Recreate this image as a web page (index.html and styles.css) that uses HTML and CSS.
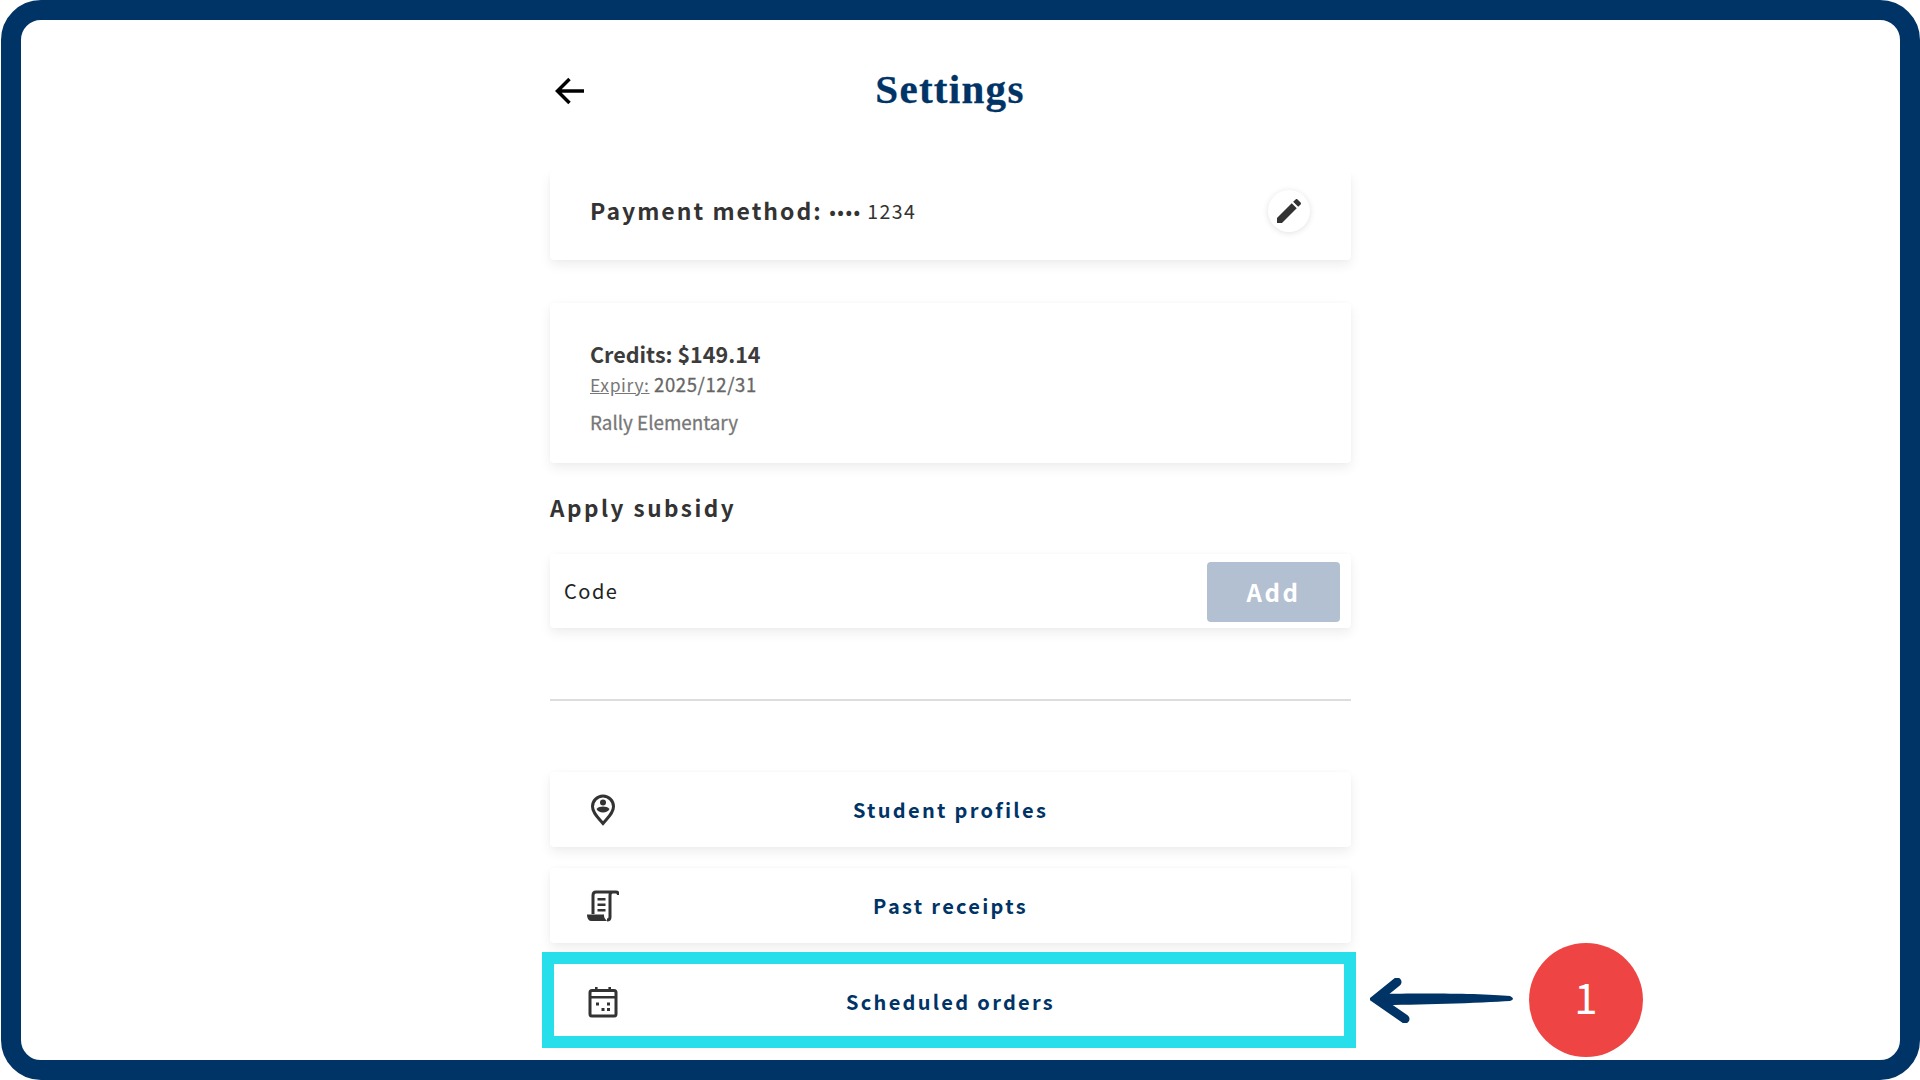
FILE: index.html
```html
<!DOCTYPE html>
<html lang="en">
<head>
<meta charset="utf-8">
<title>Settings</title>
<link rel="stylesheet" href="styles.css">
</head>
<body>
<div class="frame">
  <div class="page">
    <header class="top">
      <svg class="back" viewBox="0 0 30 28"><path d="M29 14H3M14.500 2 2.500 14l12 12"/></svg>
      <h1>Settings</h1>
      <span></span>
    </header>

    <section class="card pay">
      <p><b>Payment method:</b> <span class="num">•••• 1234</span></p>
      <span class="edit">
        <svg viewBox="0 0 24 24"><path d="M3 17.250V21h3.750L17.810 9.940l-3.750-3.750L3 17.250zM20.710 7.040c.39-.39.39-1.020 0-1.410l-2.340-2.340c-.39-.39-1.020-.39-1.410 0l-1.830 1.830 3.750 3.750 1.830-1.830z"/></svg>
      </span>
    </section>

    <section class="card credits">
      <p class="amount">Credits: $149.14</p>
      <p class="expiry"><u>Expiry:</u> <span>2025/12/31</span></p>
      <p class="school">Rally Elementary</p>
    </section>

    <h2>Apply subsidy</h2>
    <section class="card code">
      <span class="code-label">Code</span>
      <button class="add">Add</button>
    </section>

    <hr>

    <a class="card row">
      <svg class="icon" viewBox="0 0 32 32"><path class="line" d="M16 29.500C11 23.500 5.500 19 5.500 12.500a10.500 10.500 0 0 1 21 0C26.500 19 21 23.500 16 29.500z"/><circle cx="16" cy="8.500" r="3"/><path d="M9.500 15c1.500-1.800 4-2.500 6.500-2.500s5 .7 6.500 2.500c-1 2.300-3.500 3.500-6.500 3.500s-5.500-1.200-6.500-3.500z"/></svg>
      <span>Student profiles</span>
    </a>
    <a class="card row">
      <svg class="icon" viewBox="0 0 32 32"><path class="line" d="M6 24V5.500C6 3.500 7 2 9 2h20c1.500 0 2.500 1 2.500 3M25.500 2C24 2 23 3.500 23 5.500V27c0 2-1.200 3-3 3"/><path d="M10.500 8h8v2.600h-8zM10.500 13.500h8v2.600h-8zM10.500 19h8v2.600h-8z"/><path d="M0 24.500h17c0 3 .5 4 3 6.500H4c-2.500 0-4-3-4-6.500z"/></svg>
      <span>Past receipts</span>
    </a>
    <a class="card row">
      <svg class="icon" viewBox="0 0 32 32"><rect class="line" x="3" y="4.500" width="26" height="25.500" rx="2"/><path d="M3 10h26v2.500H3zM8 1h2.600v5H8zM21.400 1H24v5h-2.600zM9 16.500h3v3H9zM20 16.500h3v3h-3zM14.500 22h3v3h-3zM20 22h3v3h-3z"/></svg>
      <span>Scheduled orders</span>
    </a>
  </div>

  <div class="highlight"></div>
  <svg class="pointer" viewBox="0 0 145 45">
    <path class="shaft" d="M8 16C40 15 110 15 138 18q6 3 0 5C110 25 40 27 8 27z"/>
    <path class="barb" d="M25 4 4 21l29 20"/>
  </svg>
  <div class="step">1</div>
</div>
</body>
</html>
```

FILE: styles.css
```css
* {box-sizing: border-box;}
html, body {margin: 0; height: 100%; background: #fff;}
body {font-family: "Noto Sans CJK JP", "Noto Sans", sans-serif; color: #333; overflow: hidden;}
p {margin: 0;}

.frame {position: relative; height: 1080px; margin-left: 1px; border: 20px solid #003366; border-radius: 40px; overflow: hidden; background: #fff;}
.page {width: 801px; margin-left: 529px;}

.top {display: grid; grid-template-columns: 1fr auto 1fr; align-items: center; height: 140px; padding: 0 6px 0 5px;}
.back {width: 30px; height: 28px; margin-top: 1px; fill: none; stroke: #000; stroke-width: 3.5;}
.top h1 {margin: 0 0 2px; font: bold 41px "Liberation Serif", serif; letter-spacing: 1.3px; -webkit-text-stroke: .3px #003366; color: #003366;}

.card {display: block; background: #fff; border-radius: 4px; box-shadow: 0 5px 12px rgba(0,0,0,.07), 0 0 4px rgba(0,0,0,.02);}

.pay {display: flex; justify-content: space-between; align-items: center; height: 88px; margin-top: 12px; padding: 0 41px 12px 40px; clip-path: inset(0 -20px -20px -20px);}
.pay b {font-size: 23px; letter-spacing: 2px;}
.num {position: relative; top: -1px; font-size: 19.500px; letter-spacing: 1.400px; margin-left: 3px;}
.edit {display: flex; align-items: center; justify-content: center; width: 42px; height: 42px; margin-top: 2px; border-radius: 50%; box-shadow: 0 1px 6px rgba(0,0,0,.12);}
.edit svg {width: 32px; height: 32px; fill: #333;}

.credits {height: 160px; margin-top: 43px; padding: 33px 40px 0;}
.amount {font-size: 21.500px; font-weight: bold; line-height: 36px; color: #3c3c3c;}
.expiry {font-size: 17.500px; line-height: 24px; color: #777; letter-spacing: .6px;}
.expiry span {font-size: 18.500px; color: #666; -webkit-text-stroke: .3px #666;}
.school {margin-top: 12px; font-size: 18.800px; -webkit-text-stroke: .3px #777; line-height: 26px; color: #777;}

h2 {margin: 26px 0 0; font-size: 22.500px; font-weight: bold; line-height: 36px; letter-spacing: 2.500px;}

.code {display: flex; justify-content: space-between; align-items: center; height: 74px; margin-top: 29px; padding: 0 11px 0 14px;}
.code-label {padding-bottom: 2px; font-size: 20px; letter-spacing: 1.5px; color: #222;}
.add {width: 133px; height: 60px; margin-top: 2px; padding: 0 0 2px; border: 0; border-radius: 4px; background: #b3c0d1; color: #fff; font: bold 24px "Noto Sans CJK JP", sans-serif; letter-spacing: 2.6px;}

hr {height: 2px; margin: 71px 0; border: 0; background: #ddd;}

.row {display: grid; grid-template-columns: 1fr auto 1fr; align-items: center; height: 75px; margin-bottom: 21px; padding: 0 37px; color: #003366; font-size: 20px; font-weight: bold; letter-spacing: 2.300px;}
.icon {width: 32px; height: 32px; margin-top: 1px; fill: #333;}
.icon .line {fill: none; stroke: #333; stroke-width: 3;}

.highlight {position: absolute; left: 521px; top: 932px; width: 814px; height: 96px; border: 12px solid #26dfeb;}
.pointer {position: absolute; left: 1349px; top: 958px; width: 149px; height: 45px;}
.shaft {fill: #003366;}
.barb {fill: none; stroke: #003366; stroke-width: 9; stroke-linecap: round; stroke-linejoin: miter;}
.step {position: absolute; left: 1508px; top: 923px; width: 114px; height: 114px; border-radius: 50%; background: #ef4444; color: #fff; font-size: 42px; line-height: 106px; text-align: center;}
```
